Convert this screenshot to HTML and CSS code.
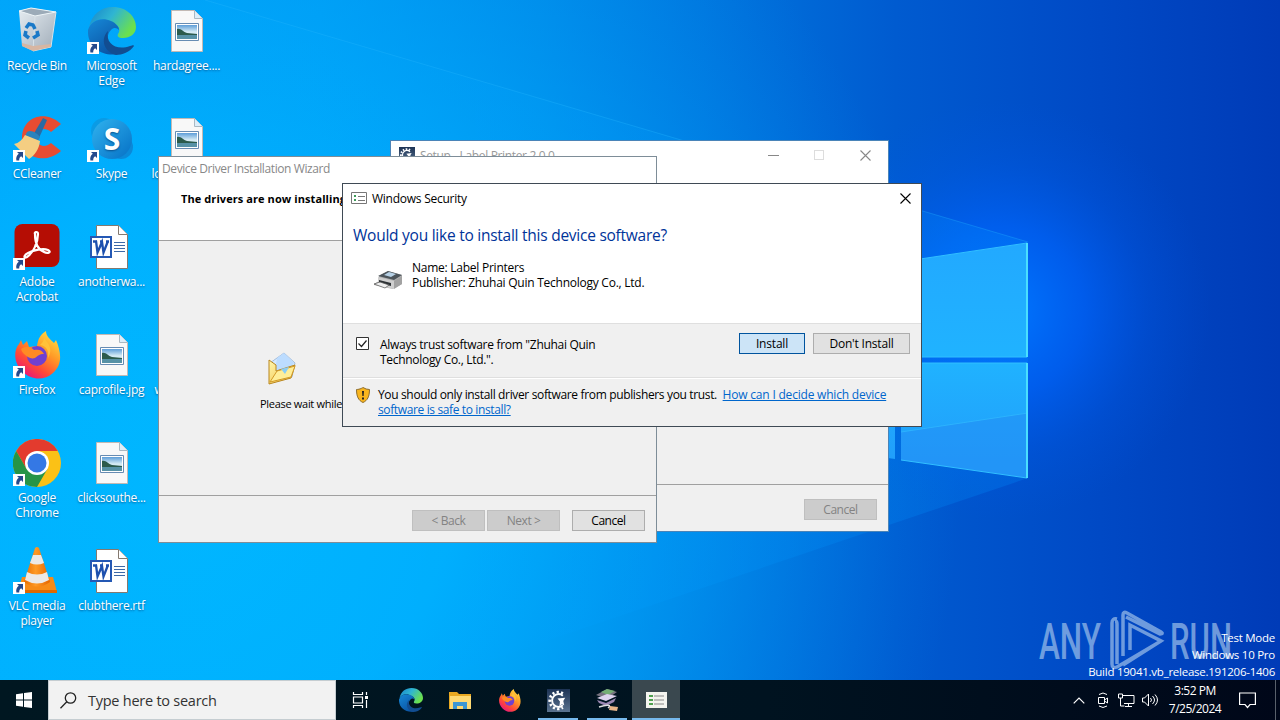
FILE: index.html
```html
<!DOCTYPE html>
<html lang="en">
<head>
  <meta charset="UTF-8" />
  <meta name="viewport" content="width=device-width, initial-scale=1.0" />
  <title>Desktop</title>
  <link rel="stylesheet" href="styles.css">
</head>
<body>
  <!-- shared icons -->
  <svg class="defs" width="0" height="0">
    <defs>
      <linearGradient id="edgeTop" x1="0" y1="0" x2="1" y2=".5"><stop offset="0" stop-color="#1683cb"/><stop offset=".5" stop-color="#2fb5d2"/><stop offset="1" stop-color="#6be04e"/></linearGradient>
      <linearGradient id="edgeLeft" x1="0" y1="0" x2=".6" y2="1"><stop offset="0" stop-color="#1689d8"/><stop offset="1" stop-color="#0b55a5"/></linearGradient>
      <linearGradient id="fox" x1="1" y1="0" x2=".3" y2="1"><stop offset="0" stop-color="#fff14a"/><stop offset=".45" stop-color="#ff9826"/><stop offset=".75" stop-color="#ff4a36"/><stop offset="1" stop-color="#e8177b"/></linearGradient>
      <linearGradient id="skype" x1="0" y1="0" x2="1" y2="1"><stop offset="0" stop-color="#30b3ef"/><stop offset="1" stop-color="#0670c5"/></linearGradient>
      <linearGradient id="bin" x1="0" y1="0" x2="1" y2="1"><stop offset="0" stop-color="#e6edf2"/><stop offset="1" stop-color="#a0acb8"/></linearGradient>
      <linearGradient id="cone" x1="0" x2="1"><stop offset="0" stop-color="#e56b00"/><stop offset=".45" stop-color="#ff9a25"/><stop offset="1" stop-color="#e46500"/></linearGradient>
      <linearGradient id="photo" x1="0" y1="0" x2="0" y2="1"><stop offset="0" stop-color="#5d9dd8"/><stop offset=".5" stop-color="#d8edf5"/><stop offset="1" stop-color="#a9cbdc"/></linearGradient>
      <linearGradient id="paper" x1="0" y1="0" x2="1" y2="1"><stop offset="0" stop-color="#fff7b0"/><stop offset="1" stop-color="#f0bc38"/></linearGradient>
      <linearGradient id="gear" x1="0" y1="0" x2="0" y2="1"><stop offset="0" stop-color="#1d3354"/><stop offset="1" stop-color="#5a7390"/></linearGradient>
    </defs>
    <symbol id="shortcut" viewBox="0 0 12 12">
      <path d="M0 0h12v12H0z" fill="#fff"/>
      <path d="M4 2h6v6L8.2 6.2C6.5 7.2 6.2 8.5 6.2 10.5H3.4C2.8 7.6 3.6 5.5 5.8 3.8z" fill="#254a8c"/>
    </symbol>
    <symbol id="edge" viewBox="0 0 48 48">
      <path d="M1 20C4 7 13 0 25 0c14 0 23 10 23 20 0 7-6 11-13 11-5 0-6-2-5-4 3-4 1-9-5-11C16 10 6 12 1 20z" fill="url(#edgeTop)"/>
      <path d="M0 23C3 13 14 10 23 14c5 2 8 6 8 9-2-2-5-3-8 0-7 7-2 18 7 24C14 50-1 40 0 23z" fill="url(#edgeLeft)"/>
      <path d="M20 24c-3 13 9 20 22 15 3-1 4-1 4 0-4 6-12 9-18 9-12-3-16-16-8-24z" fill="#124d91"/>
    </symbol>
    <symbol id="firefox" viewBox="0 0 48 48">
      <path d="M8 9l2 5 4-4 2 6 8-1c1-8 4-12 9-15 0 5 4 8 8 12l2-3c5 12 7 24-3 33-9 8-22 7-30-1C1 33 0 20 6 13z" fill="url(#fox)"/>
      <circle cx="24" cy="25" r="10" fill="#7040cf"/>
      <path d="M8 18c6-4 10-2 13 1 5-1 8 0 10 4-5 0-6 2-9 4-3 1-5 0-7-1-3-2-6-4-7-8z" fill="#ff8a24"/>
      <path d="M27 14c7 1 9 6 8 13 6-10-1-16-4-20 0 3-2 5-4 7z" fill="#ffc23a"/>
    </symbol>
    <symbol id="image-file" viewBox="0 0 32 42">
      <path d="M.5.5h23l8 8v33H.5z" fill="#f8f8f8" stroke="#c2b9b4"/>
      <path d="M23.500.5v8h8" fill="#dceefa" stroke="#aab8c2"/>
      <path d="M4.500 13.500h23v17h-23z" fill="#fff" stroke="#678cb3"/>
      <path d="M6 15h20v14H6z" fill="url(#photo)"/>
      <path d="M6 19c4-1 6 3 10 4l10 1v1H6z" fill="#2c5b4c"/>
      <path d="M6 25h20v4H6z" fill="#5792a6"/>
    </symbol>
    <symbol id="word-file" viewBox="0 0 40 46">
      <path d="M6.500 1.500h22l9 9v34h-31z" fill="#fff" stroke="#84796f"/>
      <path d="M28.500 1.500v9h9" fill="#fff" stroke="#84796f"/>
      <path d="M24 18.500h11M24 21.500h11M24 24.500h11M24 27.500h11" stroke="#3d69a8"/>
      <path d="M1 13h20v20H1z" fill="#fff" stroke="#2458b4" stroke-width="2"/>
      <path d="M3 17.500h4M10 17.500h3M16 17.500h3M6 17l1.500 11.500L12 18l1.500 10.500L18 17" fill="none" stroke="#1d50ae" stroke-width="2.300"/>
    </symbol>
    <symbol id="setup" viewBox="0 0 24 24">
      <path d="M0 0h24v24H0z" fill="url(#gear)"/>
      <path d="M16.500 4.800a8.700 8.700 0 1 0 0 14.400" fill="none" stroke="#fff" stroke-width="3" stroke-dasharray="2.200 2.200"/>
      <path d="M16.500 7a6.700 6.700 0 1 0 0 10" fill="none" stroke="#fff" stroke-width="2"/>
      <path d="M11 10l8-1-2 3.500 1 4.500-2.500-1-2.500 2 .5-5z" fill="#fff"/>
    </symbol>
    <symbol id="list" viewBox="0 0 16 12">
      <path d="M.5.5h15v11H.500z" fill="#fff" stroke="#777"/>
      <path d="M3 3h2v2H3zM3 7h2v2H3z" fill="#3d9b59"/>
      <path d="M7 4.500h7M7 8.500h7" stroke="#777"/>
    </symbol>
    <symbol id="close" viewBox="0 0 11 11"><path d="M.5.5l10 10M10.500.5l-10 10" fill="none" stroke="currentColor" stroke-width="1.100"/></symbol>
  </svg>

  <div class="desktop">
    <svg class="wallpaper" viewBox="0 0 1280 680">
      <defs>
        <linearGradient id="sky" x1="0" y1="0" x2="1280" y2="0" gradientUnits="userSpaceOnUse">
          <stop offset="0" stop-color="#00a6fd"/><stop offset=".25" stop-color="#009cf5"/><stop offset=".42" stop-color="#008ae8"/><stop offset=".55" stop-color="#0076de"/><stop offset=".7" stop-color="#005bd0"/><stop offset=".85" stop-color="#004ac6"/><stop offset="1" stop-color="#003bb7"/>
        </linearGradient>
        <radialGradient id="glow" cx="1000" cy="310" r="210" gradientUnits="userSpaceOnUse">
          <stop offset="0" stop-color="#0078ff"/><stop offset=".4" stop-color="#0065ff" stop-opacity=".65"/><stop offset=".7" stop-color="#005cf0" stop-opacity=".25"/><stop offset="1" stop-color="#0055e0" stop-opacity="0"/>
        </radialGradient>
        <radialGradient id="pool" cx="180" cy="480" r="780" gradientUnits="userSpaceOnUse">
          <stop offset="0" stop-color="#00b7ff"/><stop offset=".35" stop-color="#00b3ff" stop-opacity=".9"/><stop offset=".65" stop-color="#00a4f8" stop-opacity=".5"/><stop offset="1" stop-color="#008cf0" stop-opacity="0"/>
        </radialGradient>
        <linearGradient id="beam" x1="200" y1="0" x2="1028" y2="0" gradientUnits="userSpaceOnUse">
          <stop offset="0" stop-color="#00b0ff" stop-opacity=".08"/><stop offset="1" stop-color="#0090ff" stop-opacity=".25"/>
        </linearGradient>
        <linearGradient id="pane" x1="0" y1="0" x2="0" y2="1"><stop offset="0" stop-color="#22a9ff"/><stop offset=".5" stop-color="#20b3ff"/><stop offset="1" stop-color="#219bfa"/></linearGradient>
      </defs>
      <path d="M0 0h1280v680H0z" fill="url(#sky)"/>
      <path d="M0 0h1280v680H0z" fill="url(#pool)"/>
      <path d="M0 0h1280v680H0z" fill="url(#glow)"/>
      <path d="M205 0L1028 242V478L430 680H0V0z" fill="url(#beam)"/>
      <path d="M205 0L1028 242" stroke="#28baff" stroke-opacity=".3" fill="none"/>
      <path d="M860 268L1028 243V357H860zM901 363h127v115l-127-18zM860 363h35v96l-35-5z" fill="url(#pane)"/>
      <path d="M901 432l127-19v65l-127-18z" fill="#2390f5" opacity=".6"/>
      <path d="M901 432l127-19" stroke="#32bbff" opacity=".7"/>
      <path d="M860 268l167-25v114H860M901 363h126v115l-126-18" fill="none" stroke="#31bfff"/>
      <path d="M1027 243v114M1027 363v115" stroke="#4adfff" stroke-width="2"/>
    </svg>

    <div class="icons">
      <div class="icon">
        <svg viewBox="0 0 48 48"><path d="M6 4l12-3 25 4-5 35-18 4-11-5z" fill="url(#bin)"/><path d="M6 4l12-3 25 4-21 4z" fill="#9cabb8" stroke="#eef5f8"/><path d="M22 9l-2 35M43 5l-5 35-18 4" stroke="#d9e2e7" fill="none"/><path d="M9 36l11 3 18-2v3l-18 4-11-5z" fill="#d7b6a2"/><path d="M13 21l3-4 4 1 2 4M24 24l1 4-5 3M16 31l-4-3 1-4" fill="none" stroke="#1979c8" stroke-width="3.500"/></svg>
        <span>Recycle Bin</span>
      </div>
      <div class="icon">
        <svg viewBox="0 0 48 48"><path d="M48 9C32-6 9 2 9 23c0 20 23 27 39 13l-10-8c-7 6-15 2-15-6 0-7 8-11 15-5z" fill="#e74c32"/><path d="M30 3l4 2-8 18-6-3z" fill="#286ba5"/><path d="M14 17c4-3 10 1 13 5l-2 4-13-5z" fill="#2b83bd"/><path d="M12 20l15 6c-1 8-5 14-11 18L1 29c5-1 8-4 11-9z" fill="#f4ce82"/></svg>
        <svg class="shortcut"><use href="#shortcut"/></svg>
        <span>CCleaner</span>
      </div>
      <div class="icon">
        <svg viewBox="0 0 48 48"><rect x="1.500" y="1" width="45" height="43" rx="8" fill="#b50d04"/><path d="M22 11c-1-2 3-3 3 0 0 9-5 19-11 23-4 2-3-2 1-4 6-3 15-5 20-3 4 2 0 4-4 2-5-2-9-8-9-18z" fill="none" stroke="#fff" stroke-width="2.200"/></svg>
        <svg class="shortcut"><use href="#shortcut"/></svg>
        <span>Adobe<br>Acrobat</span>
      </div>
      <div class="icon">
        <svg><use href="#firefox"/></svg>
        <svg class="shortcut"><use href="#shortcut"/></svg>
        <span>Firefox</span>
      </div>
      <div class="icon">
        <svg viewBox="0 0 48 48"><circle cx="24" cy="24" r="24" fill="#fbc116"/><path d="M3.200 12A24 24 0 0 1 44.800 12H24L13.600 30z" fill="#e33b2e"/><path d="M3.200 12A24 24 0 0 0 24 48l10.400-18H13.600z" fill="#269447"/><circle cx="24" cy="24" r="12" fill="#fff"/><circle cx="24" cy="24" r="9.500" fill="#3478e5"/></svg>
        <svg class="shortcut"><use href="#shortcut"/></svg>
        <span>Google<br>Chrome</span>
      </div>
      <div class="icon">
        <svg viewBox="0 0 48 48"><path d="M9 30h31l4 15H5z" fill="#f78b16"/><path d="M5 43h39v3H5z" fill="#df6900"/><path d="M22 1q2-2 4 0l11 34q-13 9-26 0z" fill="url(#cone)"/><path d="M20 8h8l3 8q-7 3-14 0zM14 25q10 5 20 0l2 8q-12 7-24 0z" fill="#ece9e6"/></svg>
        <svg class="shortcut"><use href="#shortcut"/></svg>
        <span>VLC media<br>player</span>
      </div>
      <div class="icon">
        <svg><use href="#edge"/></svg>
        <svg class="shortcut"><use href="#shortcut"/></svg>
        <span>Microsoft<br>Edge</span>
      </div>
      <div class="icon">
        <svg viewBox="0 0 48 48"><circle cx="16" cy="16" r="13" fill="#0a9be5"/><circle cx="33" cy="32" r="12" fill="#0b89d8"/><circle cx="24" cy="24" r="20" fill="url(#skype)"/><text class="skype-s" x="24" y="35" text-anchor="middle">S</text></svg>
        <svg class="shortcut"><use href="#shortcut"/></svg>
        <span>Skype</span>
      </div>
      <div class="icon"><svg class="word"><use href="#word-file"/></svg><span>anotherwa...</span></div>
      <div class="icon"><svg class="file"><use href="#image-file"/></svg><span>caprofile.jpg</span></div>
      <div class="icon"><svg class="file"><use href="#image-file"/></svg><span>clicksouthe...</span></div>
      <div class="icon"><svg class="word"><use href="#word-file"/></svg><span>clubthere.rtf</span></div>
      <div class="icon"><svg class="file"><use href="#image-file"/></svg><span>hardagree....</span></div>
      <div class="icon"><svg class="file"><use href="#image-file"/></svg><span class="cut">lo</span></div>
      <div class="icon"></div>
      <div class="icon"><svg></svg><span class="cut far">w</span></div>
    </div>

    <svg class="watermark" viewBox="0 0 200 64">
      <text x="1" y="52" textLength="62" lengthAdjust="spacingAndGlyphs">ANY</text>
      <text x="132" y="52" textLength="62" lengthAdjust="spacingAndGlyphs">RUN</text>
      <path d="M79 12q-5-1-5 4v41q0 5 5 3l44-26M79 57V17q0-3-2-3M85 49V8q0-4 4-2l34 19q3 2-1 2L88 10M92 43V18l31 16-38 24" fill="none" stroke="#a9c9ed" stroke-width="3.500"/>
    </svg>
    <div class="build">Test Mode<br>Windows 10 Pro<br>Build 19041.vb_release.191206-1406</div>

    <div class="window setup">
      <div class="titlebar">
        <svg class="app"><use href="#setup"/></svg>
        <span>Setup - Label Printer 2.0.0</span>
        <div class="controls">
          <i class="min"></i><i class="max"></i><svg class="x"><use href="#close"/></svg>
        </div>
      </div>
      <div class="setup-body"></div>
      <div class="footer"><button class="btn disabled">Cancel</button></div>
    </div>

    <div class="window wizard">
      <div class="caption">Device Driver Installation Wizard</div>
      <div class="heading">The drivers are now installing...</div>
      <div class="wizard-body">
        <svg class="envelope" viewBox="0 0 30 34"><path d="M3 12L17 2l11 10-3 14-21 5z" fill="#d4e9ff" stroke="#a3bddb"/><path d="M10 7l7-5 10 10-6 8-13-1z" fill="#bcdcff"/><path d="M2 9l7 5v6l19-6-4 13L2 33z" fill="url(#paper)" stroke="#b9861e"/><path d="M3 31l7-11 18-5-4 11z" fill="#ffee98" stroke="#d29a27"/><path d="M14 18l4 5 4-7z" fill="#8acdf5"/></svg>
        <span>Please wait while</span>
      </div>
      <div class="footer">
        <button class="btn disabled">&lt; Back</button>
        <button class="btn disabled">Next &gt;</button>
        <button class="btn cancel">Cancel</button>
      </div>
    </div>

    <div class="window security">
      <div class="titlebar">
        <svg class="list"><use href="#list"/></svg>
        <span>Windows Security</span>
        <svg class="x"><use href="#close"/></svg>
      </div>
      <h1>Would you like to install this device software?</h1>
      <div class="device">
        <svg viewBox="0 0 30 20"><path d="M1 14l5-3V6l9-5 14 4v9l-9 5-10-2-9-2z" fill="#b4b4b4"/><path d="M5 6l10-5 14 4-8 5z" fill="#4c545a"/><path d="M11 5l5-3 7 2-5 3z" fill="#b7d1e6"/><path d="M5 7l16 4v8L5 15z" fill="#cfcfcf"/><path d="M21 11l8-5v8l-8 5z" fill="#a2a2a2"/><path d="M6 10l12 3v3L6 13z" fill="#2d3235"/><path d="M1 14l6-2 9 3-4 3z" fill="#eee" stroke="#555" stroke-width=".7"/></svg>
        <p>Name: Label Printers<br>Publisher: Zhuhai Quin Technology Co., Ltd.</p>
      </div>
      <div class="trust">
        <svg class="check" viewBox="0 0 13 13"><path d="M.5.5h12v12H.5z" fill="#fff" stroke="#333"/><path d="M2.500 6.500l3 3 5-6" fill="none" stroke="#222" stroke-width="1.200"/></svg>
        <p>Always trust software from "Zhuhai Quin<br>Technology Co., Ltd.".</p>
        <button class="btn primary">Install</button>
        <button class="btn dont">Don't Install</button>
      </div>
      <div class="advice">
        <svg viewBox="0 0 14 16"><path d="M7 .5q3 2 6.500 2c0 7-2 11-6.500 13C2.500 13.500.5 9.500.5 2.500 4 2.500 7 .5 7 .5z" fill="#f9b51d" stroke="#8c6c2c"/><path d="M6 4h2l-.4 5H6.400zM6 10.500h2v2H6z" fill="#222"/></svg>
        <p><span>You should only install driver software from publishers you trust.</span>&nbsp; <a>How can I decide which device</a><br><a class="rest">software is safe to install?</a></p>
      </div>
    </div>
  </div>

  <div class="taskbar">
    <div class="start"><svg width="16" height="16" viewBox="0 0 16 16"><path d="M0 2.200L7 1.200v6.300H0zM8 1l8-1v7.500H8zM0 8.500h7v6.300l-7-1zM8 8.500h8V16l-8-1z" fill="#fff"/></svg></div>
    <div class="search">
      <svg width="17" height="17" viewBox="0 0 17 17"><circle cx="10.500" cy="6" r="5.200" fill="none" stroke="#222" stroke-width="1.300"/><path d="M6.800 9.800L.5 16.200" stroke="#222" stroke-width="1.300"/></svg>
      <span>Type here to search</span>
    </div>
    <div class="task view"><svg width="17" height="16" viewBox="0 0 17 16"><path d="M1.500 0v2.500h9V0M1.500 5h9v6h-9zM1.500 16v-2.500h9V16M14.500 0v3M14.500 8v8" fill="none" stroke="#fff" stroke-width="1.200"/><path d="M13 4h3v3h-3z" fill="#fff"/></svg></div>
    <div class="task"><svg width="24" height="24"><use href="#edge"/></svg></div>
    <div class="task"><svg width="22" height="19" viewBox="0 0 22 19"><path d="M0 1h8l2 2h12v15H0z" fill="#e9a922"/><path d="M1 5h21v13H1z" fill="#ffda73"/><path d="M4 18v-7h14v7h-4v-3H8v3z" fill="#3c97d3"/></svg></div>
    <div class="task"><svg width="23" height="23"><use href="#firefox"/></svg></div>
    <div class="task open"><svg width="23" height="23"><use href="#setup"/></svg></div>
    <div class="task open"><svg width="24" height="24" viewBox="0 0 24 24"><path d="M1 7L12 1l10 3-10 7z" fill="#777380"/><path d="M6 4l6-3 8 2-7 4z" fill="#74ae75"/><path d="M2 10l10-4 10 2-11 5z" fill="#ddd3ed"/><path d="M2 12l9 3 10-5-2 4-8 4-7-3z" fill="#9b87b2"/><path d="M4 19c9-3 13-2 9 1" fill="none" stroke="#ddd" stroke-width="1.500"/><path d="M15 18l8 1-1 4-8-1z" fill="#e6b488"/></svg></div>
    <div class="task open active"><svg width="21" height="16" viewBox="0 0 21 16"><path d="M0 0h21v16H0z" fill="#f4f4ef"/><path d="M3 3h4v2H3zM3 7h4v2H3zM3 11h4v2H3z" fill="#4f9f50"/><path d="M8 4h10M8 8h10M8 12h10" stroke="#888"/></svg></div>
    <div class="tray">
      <svg class="up" width="12" height="7" viewBox="0 0 12 7"><path d="M.7 6.300L6 1l5.300 5.300" fill="none" stroke="#fff" stroke-width="1.200"/></svg>
      <svg class="meet" width="12" height="16" viewBox="0 0 12 16"><path d="M1.500 5.500h6v6h-6zM7.500 8l3-2v5l-3-2M2 2.500q4-3 8 0M2 14q4 3 8 0" fill="none" stroke="#fff"/></svg>
      <svg class="net" width="17" height="14" viewBox="0 0 17 14"><path d="M5 2.500h11v8H6M10.500 10.500v3M7 13.500h7M.5 1h4v4h-4zM2.500 5v8h4" fill="none" stroke="#fff"/></svg>
      <svg class="sound" width="17" height="14" viewBox="0 0 17 14"><path d="M.5 5h2l4-4v12l-4-4h-2zM8.500 5q2 2 0 4M10.500 3q4 4 0 8M13 1.500q5 5.500 0 11" fill="none" stroke="#fff"/></svg>
      <div class="clock">3:52 PM<br>7/25/2024</div>
      <svg class="notes" width="17" height="17" viewBox="0 0 17 17"><path d="M.6 1h15.800v11.500H11l-2.500 3-2.500-3H.6z" fill="none" stroke="#fff" stroke-width="1.200"/></svg>
      <div class="peek"></div>
    </div>
  </div>
</body>
</html>
```

FILE: styles.css
```css
* {
  box-sizing: border-box;
}
body {
  margin: 0;
  width: 1280px;
  height: 720px;
  overflow: hidden;
  font-family: "Open Sans", "Noto Sans", sans-serif;
  font-size: 12px;
  line-height: 15px;
  letter-spacing: -0.25px;
  color: #000;
}
p, h1 {
  margin: 0;
}
svg {
  flex-shrink: 0;
}
.defs {
  position: absolute;
}
.desktop {
  position: relative;
  height: 680px;
  overflow: hidden;
}
.wallpaper {
  position: absolute;
  width: 1280px;
  height: 680px;
}

/* desktop icons */
.icons {
  position: relative;
  display: grid;
  grid-auto-flow: column;
  grid-template-rows: repeat(6, 108px);
  grid-template-columns: 74px 75px 75px;
  padding-top: 7px;
  width: 224px;
}
.icon {
  position: relative;
  display: flex;
  flex-direction: column;
  align-items: center;
  color: #fff;
  text-align: center;
  white-space: nowrap;
  text-shadow: 0 1px 2px rgba(0, 40, 90, 0.6);
}
.icon > svg {
  width: 48px;
  height: 48px;
}
.icon .file {
  width: 32px;
  height: 42px;
  margin: 3px 0;
}
.icon .word {
  width: 40px;
  height: 46px;
  margin: 1px 4px 1px 0;
}
.icon .shortcut {
  position: absolute;
  left: 13px;
  top: 35px;
  width: 12px;
  height: 12px;
}
.icon span {
  margin-top: 3px;
}
.icon .cut {
  width: 70px;
  text-align: left;
}
.icon .far {
  padding-left: 3px;
}
.skype-s {
  font: bold 30px "Open Sans", sans-serif;
  fill: #fff;
}

/* corner text */
.watermark {
  position: absolute;
  left: 1038px;
  top: 607px;
  width: 200px;
  height: 64px;
  opacity: 0.65;
}
.watermark text {
  font: 500 50px "Roboto", sans-serif;
  letter-spacing: 0;
  fill: #a9c9ed;
}
.build {
  position: absolute;
  right: 5px;
  bottom: 0;
  color: #fff;
  text-align: right;
  font-size: 11.5px;
  line-height: 17px;
}

/* windows */
.window {
  position: absolute;
  display: flex;
  flex-direction: column;
  background: #fff;
}
.titlebar {
  display: flex;
  align-items: center;
}
.x {
  width: 11px;
  height: 11px;
}
.btn {
  width: 73px;
  height: 21px;
  padding: 0;
  border: 1px solid #adadad;
  background: #e1e1e1;
  color: #000;
  font: inherit;
  letter-spacing: -0.2px;
}
.btn.disabled {
  border-color: #bfbfbf;
  background: #ccc;
  color: #838383;
}
.wizard .btn, .setup .btn {
  letter-spacing: -0.45px;
}
.footer {
  display: flex;
  justify-content: flex-end;
  background: #f0f0f0;
  border-top: 1px solid #a0a0a0;
}
.setup {
  left: 390px;
  top: 140px;
  width: 499px;
  height: 392px;
  border: 1px solid #4a84b8;
}
.setup .titlebar {
  height: 28px;
  padding: 0 17px 0 8px;
  color: #999;
  letter-spacing: -0.35px;
}
.app {
  width: 16px;
  height: 16px;
  margin-right: 5px;
}
.controls {
  display: flex;
  align-items: center;
  gap: 40px;
  margin-left: auto;
}
.min {
  width: 11px;
  margin-right: -5px;
  border-top: 1px solid #888;
}
.max {
  width: 10px;
  height: 10px;
  margin-right: -4px;
  border: 1px solid #ddd;
}
.controls .x {
  color: #888;
}
.setup-body {
  flex: 1;
  background: #f0f0f0;
  border-top: 30px solid #fff;
}
.setup .footer {
  height: 47px;
  padding: 14px 11px 0;
}
.wizard {
  left: 158px;
  top: 156px;
  width: 499px;
  height: 387px;
  border: 1px solid #7e8d98;
}
.caption {
  height: 27px;
  padding: 4px 3px;
  color: #888;
  letter-spacing: -0.4px;
}
.heading {
  height: 57px;
  padding: 7px 22px;
  font-size: 11px;
  font-weight: bold;
  letter-spacing: 0.08px;
  border-bottom: 1px solid #a0a0a0;
}
.wizard-body {
  flex: 1;
  padding: 110px 0 0 101px;
  background: #f0f0f0;
}
.wizard-body span {
  display: block;
  margin-top: 11px;
  font-size: 11px;
  letter-spacing: -0.3px;
}
.envelope {
  display: block;
  width: 30px;
  height: 34px;
  margin-left: 7px;
}
.wizard .footer {
  height: 47px;
  padding: 14px 11px 0;
  gap: 2px;
}
.wizard .cancel {
  margin-left: 10px;
}
.security {
  left: 342px;
  top: 183px;
  width: 580px;
  height: 244px;
  border: 1px solid #3f4a55;
}
.security .titlebar {
  height: 28px;
  padding: 0 10px 0 8px;
}
.security .x {
  margin-left: auto;
}
.list {
  width: 16px;
  height: 12px;
  margin-right: 5px;
}
.security h1 {
  height: 45px;
  padding: 11px 10px 0;
  color: #003399;
  font-size: 15.5px;
  font-weight: normal;
  line-height: 24px;
}
.device {
  display: flex;
  flex: 1;
  padding: 3px 0 0 30px;
}
.device svg {
  width: 30px;
  height: 20px;
  margin: 10px 9px 0 0;
}
.trust {
  display: flex;
  height: 54px;
  padding: 9px 11px 0 13px;
  background: #f0f0f0;
  border-top: 1px solid #dfdfdf;
}
.check {
  width: 13px;
  height: 13px;
  margin: 4px 11px 0 0;
}
.trust p {
  flex: 1;
  padding-top: 4px;
  letter-spacing: -0.3px;
}
.btn.primary {
  width: 66px;
  border-color: #00549e;
  background: #cce4f7;
}
.btn.dont {
  width: 97px;
  margin-left: 8px;
}
.advice {
  display: flex;
  height: 49px;
  padding: 9px 12px 0 13px;
  background: #f0f0f0;
  border-top: 1px solid #dfdfdf;
  box-shadow: inset 0 1px #fff;
  white-space: nowrap;
}
.advice svg {
  width: 14px;
  height: 16px;
  margin-right: 8px;
}
.advice span {
  letter-spacing: -0.35px;
}
.advice a {
  color: #0066cc;
  text-decoration: underline;
  letter-spacing: -0.2px;
}
.advice .rest {
  letter-spacing: -0.37px;
}

/* taskbar */
.taskbar {
  display: flex;
  height: 40px;
  background: linear-gradient(90deg, #001721, #001320 60%, #000719);
}
.start, .task {
  display: flex;
  align-items: center;
  justify-content: center;
  width: 48px;
}
.search {
  display: flex;
  align-items: center;
  width: 288px;
  padding-left: 11px;
  gap: 11px;
  background: #f2f2f2;
  border: 1px solid #c5cdd1;
  color: #333;
  font-size: 14.5px;
}
.task {
  margin-right: 1px;
}
.task.view {
  margin-right: 3px;
}
.task.open {
  background: linear-gradient(#76b9ed, #76b9ed) center bottom / 40px 2px no-repeat;
}
.task.active {
  background: linear-gradient(#76b9ed, #76b9ed) center bottom / 48px 2px no-repeat #3a484f;
}
.tray {
  display: flex;
  align-items: center;
  margin-left: auto;
  color: #fff;
}
.up {
  margin-right: 12px;
}
.meet {
  margin-right: 9px;
}
.net {
  margin-right: 7px;
}
.sound {
  margin-right: 9px;
}
.clock {
  width: 54px;
  text-align: center;
  line-height: 18px;
  letter-spacing: -0.5px;
}
.notes {
  margin-left: 17px;
}
.peek {
  width: 5px;
  height: 40px;
  margin-left: 19px;
  border-left: 1px solid #59616b;
}
```
